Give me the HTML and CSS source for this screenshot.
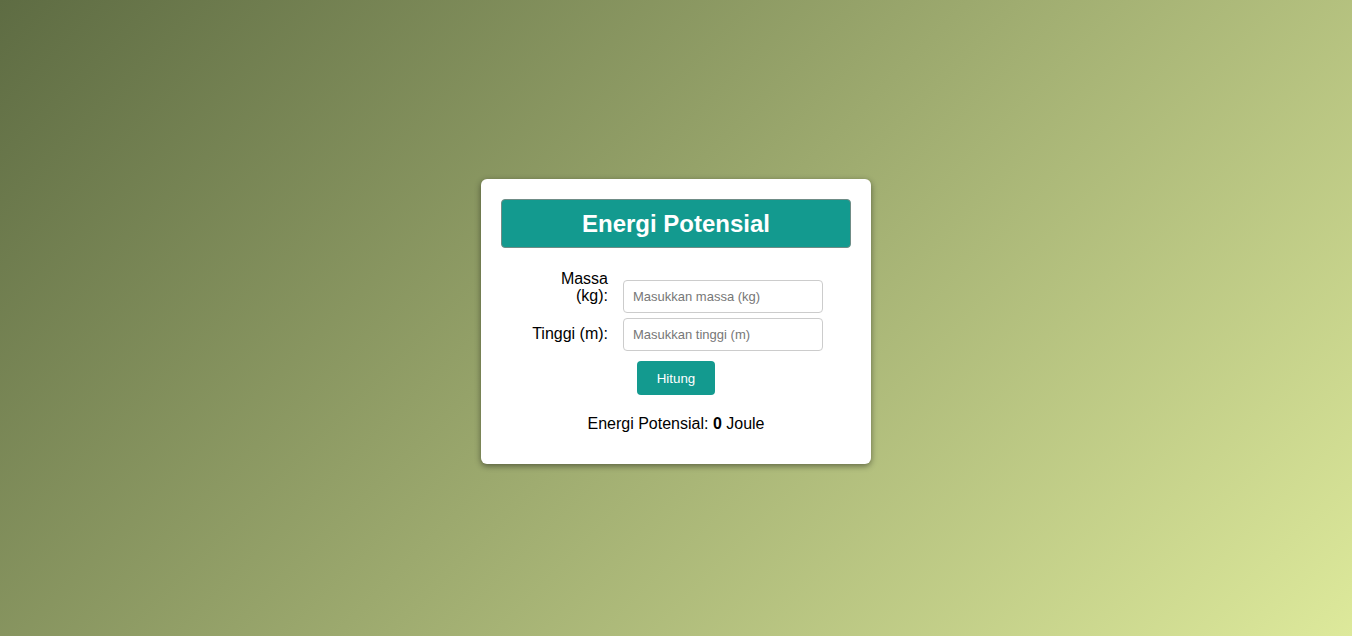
FILE: index.html
```html
<!DOCTYPE html>
<html lang="id">
<head>
<meta charset="utf-8">
<title>Energi Potensial</title>
<link rel="stylesheet" href="styles.css">
</head>
<body>
<main class="page">
  <section class="card">
    <h1 class="title">Energi Potensial</h1>
    <form class="form">
      <div class="row">
        <label class="label" for="massa">Massa (kg):</label>
        <input class="input" id="massa" type="text" placeholder="Masukkan massa (kg)">
      </div>
      <div class="row">
        <label class="label" for="tinggi">Tinggi (m):</label>
        <input class="input" id="tinggi" type="text" placeholder="Masukkan tinggi (m)">
      </div>
      <button class="btn" type="button">Hitung</button>
    </form>
    <p class="result">Energi Potensial: <strong>0</strong> Joule</p>
  </section>
</main>
</body>
</html>
```

FILE: styles.css
```css
html, body {
  margin: 0;
  height: 100%;
}
body {
  font-family: "Liberation Sans", Arial, sans-serif;
  background: linear-gradient(135deg, #5e6c43 0%, #dde99b 100%);
}
.page {
  height: 100%;
  display: flex;
  align-items: center;
  justify-content: center;
}
.card {
  box-sizing: border-box;
  width: 390px;
  background: #fff;
  border-radius: 6px;
  padding: 20px 20px 31px;
  box-shadow: 0 2px 6px rgba(0, 0, 0, 0.45);
  margin-top: 7px;
}
.title {
  margin: 0;
  height: 49px;
  box-sizing: border-box;
  border: 1px solid #6f8c86;
  border-radius: 4px;
  background: #139a8f;
  color: #fff;
  font-size: 24px;
  font-weight: bold;
  text-align: center;
  line-height: 47px;
}
.form {
  display: flex;
  flex-direction: column;
  align-items: center;
  margin-top: 22px;
}
.row {
  display: flex;
  align-items: last baseline;
  gap: 15px;
  margin-bottom: 5px;
}
.label {
  width: 79px;
  text-align: right;
  font-size: 16px;
  color: #000;
  line-height: 17px;
}
.input {
  box-sizing: border-box;
  width: 200px;
  height: 33px;
  border: 1px solid #ccc;
  border-radius: 4px;
  padding: 0 9px;
  font-family: "Liberation Sans", Arial, sans-serif;
  font-size: 13px;
}
.input::placeholder {
  color: #777;
}
.btn {
  margin-top: 5px;
  width: 78px;
  height: 34px;
  border: none;
  border-radius: 4px;
  background: #139a8f;
  color: #fff;
  font-family: "Liberation Sans", Arial, sans-serif;
  font-size: 13.33px;
  font-weight: normal;
}
.result {
  margin: 20px 0 0;
  text-align: center;
  font-size: 16px;
  color: #000;
}
```
